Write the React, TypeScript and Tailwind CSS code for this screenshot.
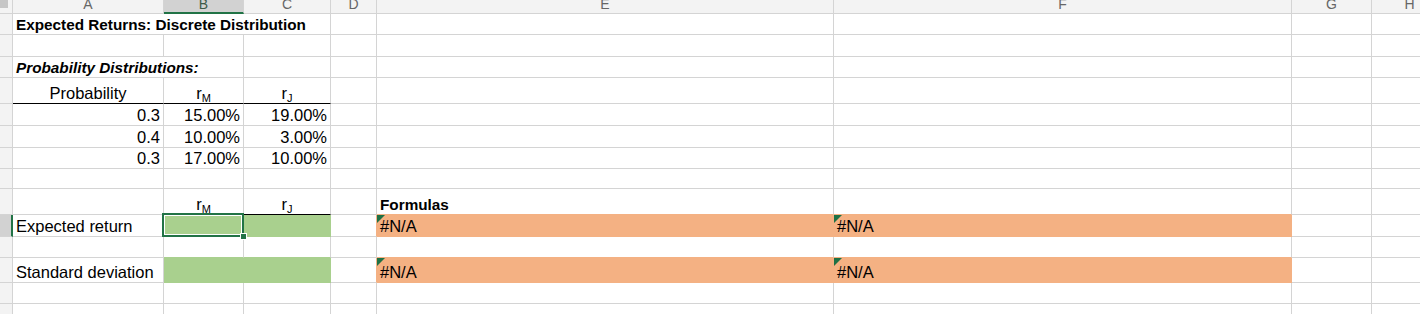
import * as React from "react"

// Excel-like sheet: fixed column widths / row heights (incl. the 1px gridline)

type CellProps = {
  children?: React.ReactNode
  className?: string
  rc?: string
  bc?: string
  align?: "left" | "right" | "center"
  bold?: boolean
  err?: boolean
}

function Cell({ children, className = "", rc = "border-r-[#d4d4d4]", bc = "border-b-[#d4d4d4]", align = "left", bold, err }: CellProps) {
  const justify =
    align === "right" ? "justify-end pr-[3px]" : align === "center" ? "justify-center" : "justify-start pl-[3px]"
  const type = bold ? "pb-0 text-[15.3px] font-bold" : "pb-[1px] text-[16.5px]"
  return (
    <div
      className={`relative flex items-end overflow-visible whitespace-nowrap border-r border-b leading-[18px] text-black ${type} ${justify} ${rc} ${bc} ${className}`}
    >
      {err && (
        <svg className="absolute left-0 top-0" width="8" height="8" viewBox="0 0 8 8">
          <polygon points="0,0 8,0 0,8" fill="#1e7145" />
        </svg>
      )}
      {children}
    </div>
  )
}

function Sub({ main, sub }: { main: string; sub: string }) {
  return (
    <span>
      {main}
      <sub className="relative bottom-[-3px] text-[11px] leading-none">{sub}</sub>
    </span>
  )
}

function RowHead({ active }: { active?: boolean }) {
  return active ? (
    <div className="border-b border-r-2 border-b-[#d4d4d4] border-r-[#217346] bg-[#d2d2d2]" />
  ) : (
    <div className="border-b border-r border-[#d4d4d4] bg-[#f3f3f3]" />
  )
}

function Empty({ n }: { n: number }) {
  return (
    <>
      {Array.from({ length: n }).map((_, i) => (
        <Cell key={i} />
      ))}
    </>
  )
}

const GREEN_FILL = "bg-[#a9d08e]"
const ORANGE_FILL = "bg-[#f4b183]"

export default function App() {
  const cols = ["A", "B", "C", "D", "E", "F", "G", "H"]

  return (
    <div className="h-[314px] w-[1420px] overflow-hidden bg-white font-['Liberation_Sans',Arial,sans-serif]">
      <div className="relative grid w-[1448px] grid-cols-[13px_151px_80px_87px_46px_457px_458px_80px_76px] grid-rows-[14px_21px_22px_21px_26px_22px_22px_21px_20px_26px_22px_21px_25px_21px_21px]">
        {/* column headers */}
        <div className="flex items-start border-b border-r border-[#d4d4d4] bg-[#f3f3f3]">
          <div className="h-[8px] w-[8px] bg-[#c6c6c6]" />
        </div>
        {cols.map((c) =>
          c === "B" ? (
            <div
              key={c}
              className="flex items-end justify-center overflow-hidden border-r border-b-2 border-r-[#d4d4d4] border-b-[#217346] bg-[#d2d2d2] pb-[1px] text-[14px] leading-[14px] text-[#3d5a48]"
            >
              {c}
            </div>
          ) : (
            <div
              key={c}
              className="flex items-end justify-center overflow-hidden border-r border-b border-[#d4d4d4] bg-[#f3f3f3] pb-[2px] text-[14px] leading-[14px] text-[#666]"
            >
              {c}
            </div>
          )
        )}

        {/* 1 */}
        <RowHead />
        <Cell bold className="col-span-3">Expected Returns: Discrete Distribution</Cell>
        <Empty n={5} />

        {/* 2 */}
        <RowHead />
        <Empty n={8} />

        {/* 3 */}
        <RowHead />
        <Cell bold className="col-span-2 italic">Probability Distributions:</Cell>
        <Empty n={6} />

        {/* 4 */}
        <RowHead />
        <Cell align="center" bc="border-b-black">Probability</Cell>
        <Cell align="center" bc="border-b-black">
          <Sub main="r" sub="M" />
        </Cell>
        <Cell align="center" bc="border-b-black">
          <Sub main="r" sub="J" />
        </Cell>
        <Empty n={5} />

        {/* 5-7 data */}
        {[
          ["0.3", "15.00%", "19.00%"],
          ["0.4", "10.00%", "3.00%"],
          ["0.3", "17.00%", "10.00%"],
        ].map((r, i) => (
          <React.Fragment key={i}>
            <RowHead />
            <Cell align="right">{r[0]}</Cell>
            <Cell align="right">{r[1]}</Cell>
            <Cell align="right">{r[2]}</Cell>
            <Empty n={5} />
          </React.Fragment>
        ))}

        {/* 8 */}
        <RowHead />
        <Empty n={8} />

        {/* 9 */}
        <RowHead />
        <Cell />
        <Cell align="center" bc="border-b-black">
          <Sub main="r" sub="M" />
        </Cell>
        <Cell align="center" bc="border-b-black">
          <Sub main="r" sub="J" />
        </Cell>
        <Cell />
        <Cell bold bc="border-b-[#f4b183]">Formulas</Cell>
        <Cell bc="border-b-[#f4b183]" />
        <Empty n={2} />

        {/* 10 */}
        <RowHead active />
        <Cell>Expected return</Cell>
        <Cell rc="border-r-[#a9d08e]" bc="border-b-[#a9d08e]" className={GREEN_FILL} />
        <Cell rc="border-r-[#a9d08e]" bc="border-b-[#a9d08e]" className={GREEN_FILL} />
        <Cell rc="border-r-[#f4b183]" />
        <Cell err rc="border-r-[#f4b183]" bc="border-b-[#f4b183]" className={ORANGE_FILL}>#N/A</Cell>
        <Cell err rc="border-r-[#f4b183]" bc="border-b-[#f4b183]" className={ORANGE_FILL}>#N/A</Cell>
        <Empty n={2} />

        {/* 11 */}
        <RowHead />
        <Cell />
        <Cell bc="border-b-[#a9d08e]" />
        <Cell bc="border-b-[#a9d08e]" />
        <Cell />
        <Cell bc="border-b-[#f4b183]" />
        <Cell bc="border-b-[#f4b183]" />
        <Empty n={2} />

        {/* 12 */}
        <RowHead />
        <Cell>Standard deviation</Cell>
        <Cell rc="border-r-[#a9d08e]" bc="border-b-[#a9d08e]" className={GREEN_FILL} />
        <Cell rc="border-r-[#a9d08e]" bc="border-b-[#a9d08e]" className={GREEN_FILL} />
        <Cell rc="border-r-[#f4b183]" />
        <Cell err rc="border-r-[#f4b183]" bc="border-b-[#f4b183]" className={ORANGE_FILL}>#N/A</Cell>
        <Cell err rc="border-r-[#f4b183]" bc="border-b-[#f4b183]" className={ORANGE_FILL}>#N/A</Cell>
        <Empty n={2} />

        {/* 13-14 */}
        <RowHead />
        <Empty n={8} />
        <RowHead />
        <Empty n={8} />

        {/* active cell selection on B10 */}
        <div className="pointer-events-none absolute left-[162px] top-[213px] h-[24px] w-[82px] border-2 border-[#217346] shadow-[inset_0_0_0_1px_white]" />
        <div className="pointer-events-none absolute left-[240px] top-[233px] h-[7px] w-[7px] border border-white bg-[#217346]" />
      </div>
    </div>
  )
}
